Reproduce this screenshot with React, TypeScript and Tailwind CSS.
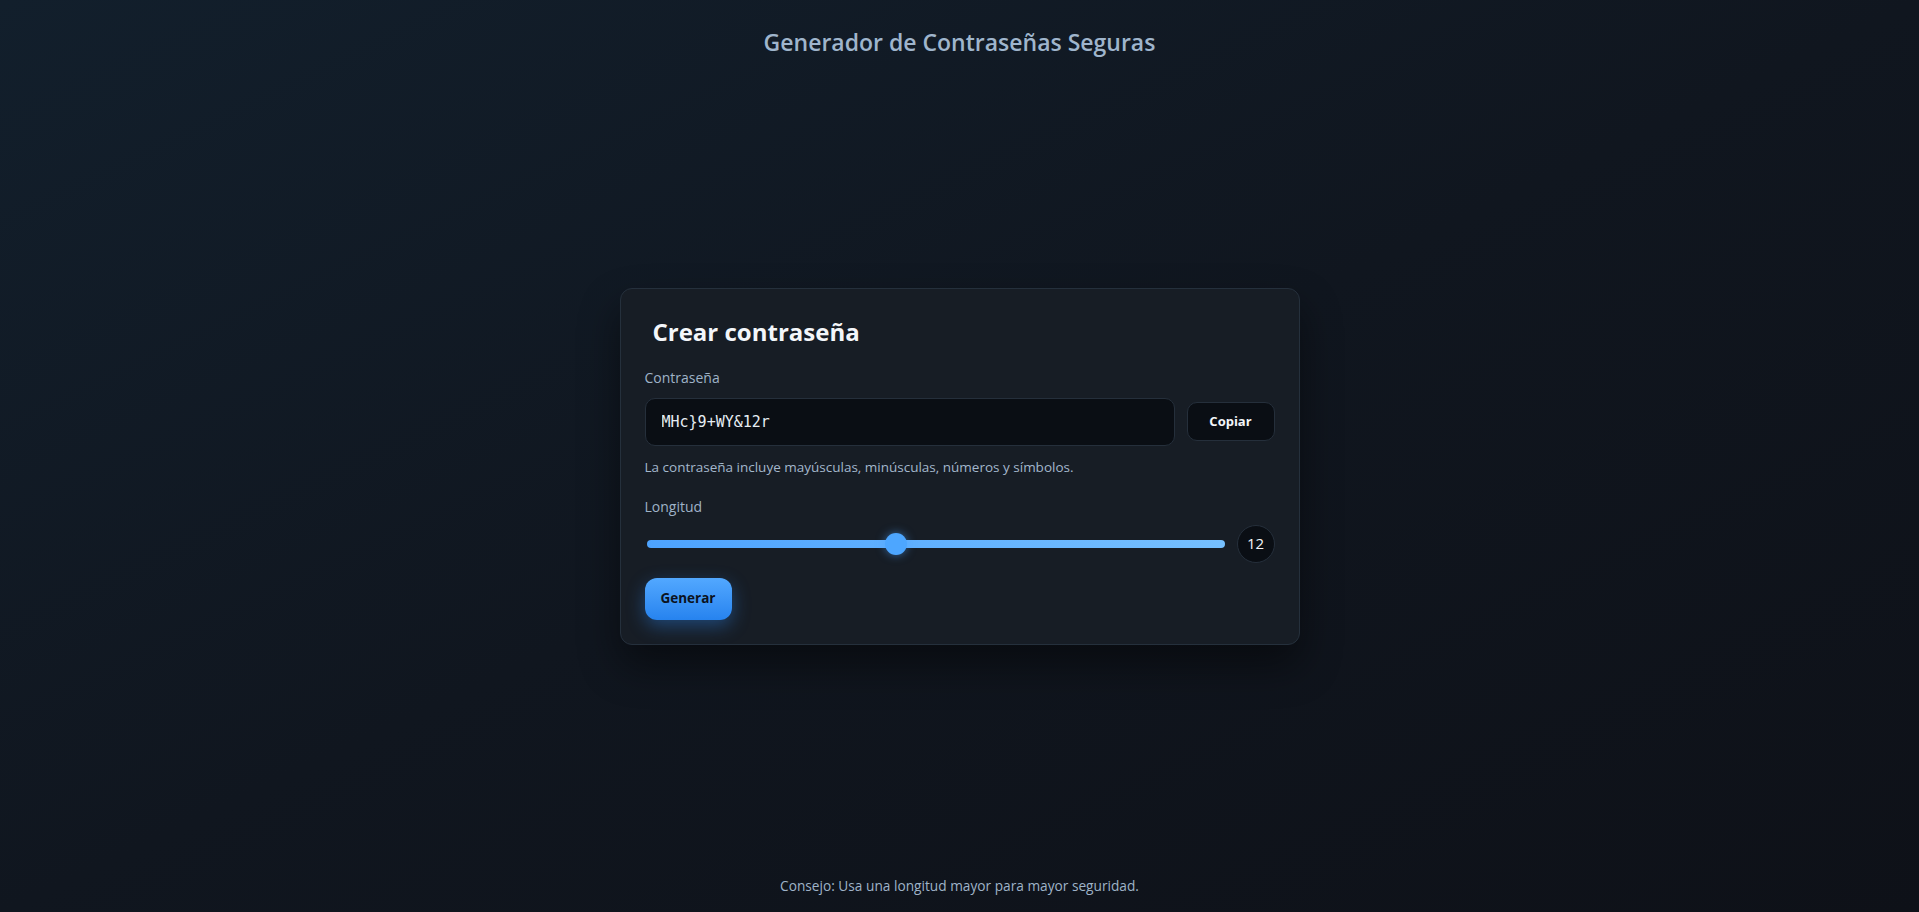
import { useState } from "react";

const CHARSET = "ABCDEFGHIJKLMNOPQRSTUVWXYZabcdefghijklmnopqrstuvwxyz0123456789!@#$%^&*()_+-=[]{}<>?";

function makePassword(len: number) {
    let out = "";
    for (let i = 0; i < len; i++) {
        out += CHARSET[Math.floor(Math.random() * CHARSET.length)];
    }
    return out;
}

function App() {
    const [length, setLength] = useState(12);
    const [password, setPassword] = useState("MHc}9+WY&12r");

    return (
        <div className="min-h-screen flex flex-col bg-linear-to-br from-[#121f2c] via-[#10161f] to-[#0e1118] font-['Open_Sans','Noto_Sans',sans-serif] text-[#e6edf3]">
            <header className="py-7 text-center">
                <h1 className="text-[23px] leading-7 font-semibold text-[#9fb5cc]">Generador de Contraseñas Seguras</h1>
            </header>

            <main className="flex-1 flex items-center justify-center pb-3">
                <section className="w-[680px] rounded-xl border border-[#25303c] bg-[#171d25] px-6 pt-[27px] pb-6 shadow-[0_20px_40px_rgba(0,0,0,0.45)]">
                    <h2 className="ml-2 mb-5 text-2xl leading-8 font-bold text-[#f3f6fa]">Crear contraseña</h2>

                    <label className="block text-sm leading-5 text-[#9fb3c8] mb-2.5">Contraseña</label>
                    <div className="flex items-center gap-3">
                        <input
                            readOnly
                            value={password}
                            className="flex-1 h-12 rounded-[10px] border border-[#252f3b] bg-[#0a0e14] px-4 font-['DejaVu_Sans_Mono','Liberation_Mono',monospace] text-[15px] text-[#e6edf3] outline-none"
                        />
                        <button className="h-[39px] w-[88px] rounded-[10px] border border-[#252f3b] bg-[#0a0e14] text-[13px] font-bold text-[#f3f6fa]">
                            Copiar
                        </button>
                    </div>
                    <p className="mt-3 text-[13.5px] leading-[19px] text-[#a3b7cc]">La contraseña incluye mayúsculas, minúsculas, números y símbolos.</p>

                    <label className="block mt-5 text-sm leading-5 text-[#9fb3c8]">Longitud</label>
                    <div className="mt-2 flex items-center gap-3">
                        <input
                            type="range"
                            min={6}
                            max={20}
                            value={length}
                            onChange={(e) => setLength(Number(e.target.value))}
                            className="flex-1 ml-0.5 h-2 appearance-none rounded-full bg-linear-to-r from-[#4da3ff] to-[#76c0ff] outline-none [&::-webkit-slider-thumb]:h-[22px] [&::-webkit-slider-thumb]:w-[22px] [&::-webkit-slider-thumb]:appearance-none [&::-webkit-slider-thumb]:rounded-full [&::-webkit-slider-thumb]:bg-[#4da6ff] [&::-webkit-slider-thumb]:shadow-[0_0_10px_rgba(77,163,255,0.55)]"
                        />
                        <span className="flex h-[38px] w-[38px] items-center justify-center rounded-full border border-[#252f3b] bg-[#0a0e14] text-[15px] text-[#f3f6fa]">
                            {length}
                        </span>
                    </div>

                    <button
                        onClick={() => setPassword(makePassword(length))}
                        className="mt-[15px] h-[42px] w-[87px] rounded-xl bg-linear-to-b from-[#52a8ff] to-[#2683ef] text-[13.5px] font-bold text-[#0b1220] shadow-[0_6px_18px_rgba(45,135,240,0.4)]"
                    >
                        Generar
                    </button>
                </section>
            </main>

            <footer className="py-4 text-center text-[13.7px] leading-5 text-[#9fb3c8]">
                Consejo: Usa una longitud mayor para mayor seguridad.
            </footer>
        </div>
    );
}

export default App;
